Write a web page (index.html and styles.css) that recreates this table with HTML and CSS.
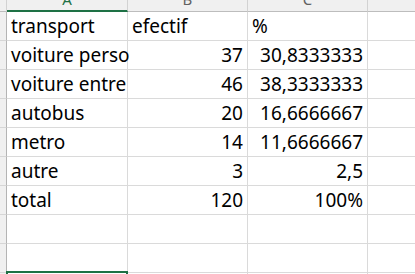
FILE: index.html
```html
<!DOCTYPE html>
<html lang="fr">
<head>
<meta charset="utf-8">
<title>transport</title>
<link rel="stylesheet" href="styles.css">
</head>
<body>
<div class="sheet">
  <!-- column headers -->
  <div class="corner"></div>
  <div class="colhead active"><span>A</span></div>
  <div class="colhead"><span>B</span></div>
  <div class="colhead"><span>C</span></div>
  <div class="colhead last"></div>

  <div class="rowhead"></div>
  <div class="cell">transport</div>
  <div class="cell">efectif</div>
  <div class="cell">%</div>
  <div class="cell last"></div>

  <div class="rowhead"></div>
  <div class="cell">voiture perso</div>
  <div class="cell num">37</div>
  <div class="cell num">30,8333333</div>
  <div class="cell last"></div>

  <div class="rowhead"></div>
  <div class="cell">voiture entre</div>
  <div class="cell num">46</div>
  <div class="cell num">38,3333333</div>
  <div class="cell last"></div>

  <div class="rowhead"></div>
  <div class="cell">autobus</div>
  <div class="cell num">20</div>
  <div class="cell num">16,6666667</div>
  <div class="cell last"></div>

  <div class="rowhead"></div>
  <div class="cell">metro</div>
  <div class="cell num">14</div>
  <div class="cell num">11,6666667</div>
  <div class="cell last"></div>

  <div class="rowhead"></div>
  <div class="cell">autre</div>
  <div class="cell num">3</div>
  <div class="cell num">2,5</div>
  <div class="cell last"></div>

  <div class="rowhead"></div>
  <div class="cell">total</div>
  <div class="cell num">120</div>
  <div class="cell num">100%</div>
  <div class="cell last"></div>

  <div class="rowhead"></div>
  <div class="cell"></div>
  <div class="cell"></div>
  <div class="cell"></div>
  <div class="cell last"></div>

  <div class="rowhead"></div>
  <div class="cell"></div>
  <div class="cell"></div>
  <div class="cell"></div>
  <div class="cell last"></div>

  <div class="rowhead"></div>
  <div class="cell selected"></div>
  <div class="cell"></div>
  <div class="cell"></div>
  <div class="cell last"></div>
</div>
</body>
</html>
```

FILE: styles.css
```css
html, body {
  margin: 0;
  padding: 0;
  background: #ffffff;
  overflow: hidden;
}

.sheet {
  display: grid;
  grid-template-columns: 7px 121px 120px 120px 1fr;
  grid-template-rows: 12px repeat(10, 29px);
  width: 415px;
  font-family: "Noto Sans", "Open Sans", sans-serif;
  font-size: 19px;
  color: #000000;
}

.corner,
.colhead {
  box-sizing: border-box;
  background: #f0f0f0;
  border-bottom: 1px solid #bdbdbd;
  border-right: 1px solid #d2d2d2;
}

.colhead {
  display: flex;
  justify-content: center;
  align-items: flex-end;
  overflow: hidden;
  color: #616161;
  font-size: 15px;
}

.colhead span {
  line-height: 15px;
  margin-bottom: 4px;
}

.colhead.active {
  color: #1e7145;
  border-bottom: 2px solid #1e7145;
}

.colhead.active span {
  margin-bottom: 3px;
}

.colhead.last,
.cell.last {
  border-right: none;
}

.rowhead {
  box-sizing: border-box;
  background: #f0f0f0;
  border-right: 1px solid #b4b4b4;
  border-bottom: 1px solid #d6d6d6;
}

.cell {
  box-sizing: border-box;
  border-right: 1px solid #dadada;
  border-bottom: 1px solid #dadada;
  padding: 0 4px;
  line-height: 28px;
  white-space: nowrap;
  overflow: visible;
}

.cell.num {
  text-align: right;
}

.cell.selected {
  position: relative;
}

/* active cell frame */
.cell.selected::after {
  content: "";
  position: absolute;
  top: -2px;
  left: -1px;
  right: -1px;
  bottom: 0;
  border: 2px solid #1e7145;
}
```
